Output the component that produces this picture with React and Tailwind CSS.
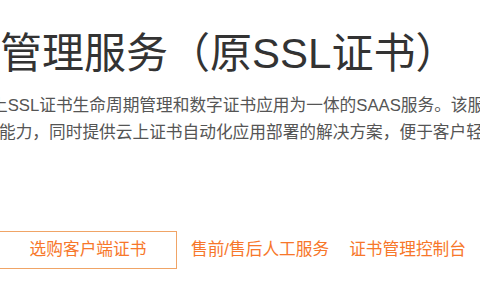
import React from "react"

const FONT = { fontFamily: '"Liberation Sans", "Noto Sans CJK SC", sans-serif' }

const App = () => {
  return (
    <div style={FONT} className="w-[480px] h-[300px] overflow-hidden bg-white">
      {/*Title*/}
      <div className="pt-[26px] whitespace-nowrap text-[42px] leading-[56px] text-[#333]">
        管理服务（原SSL证书）
      </div>
      {/*Description*/}
      <div className="mt-[10px] text-[16.7px] leading-[27px] text-[#555] whitespace-nowrap">
        <div className="ml-[-9px]">上SSL证书生命周期管理和数字证书应用为一体的SAAS服务。该服务</div>
        <div className="ml-[-1px]">能力，同时提供云上证书自动化应用部署的解决方案，便于客户轻松</div>
      </div>
      {/*Actions*/}
      <div className="mt-[85px] flex flex-row items-center whitespace-nowrap text-[16.7px] text-[#f7772a]">
        <button className="ml-[-1px] w-[178px] h-[38px] border border-[#f0a466] bg-white text-[#f7772a] flex items-center justify-center">
          选购客户端证书
        </button>
        <a className="ml-[14px]">售前/售后人工服务</a>
        <a className="ml-[20px]">证书管理控制台</a>
      </div>
    </div>
  )
}

export default App
